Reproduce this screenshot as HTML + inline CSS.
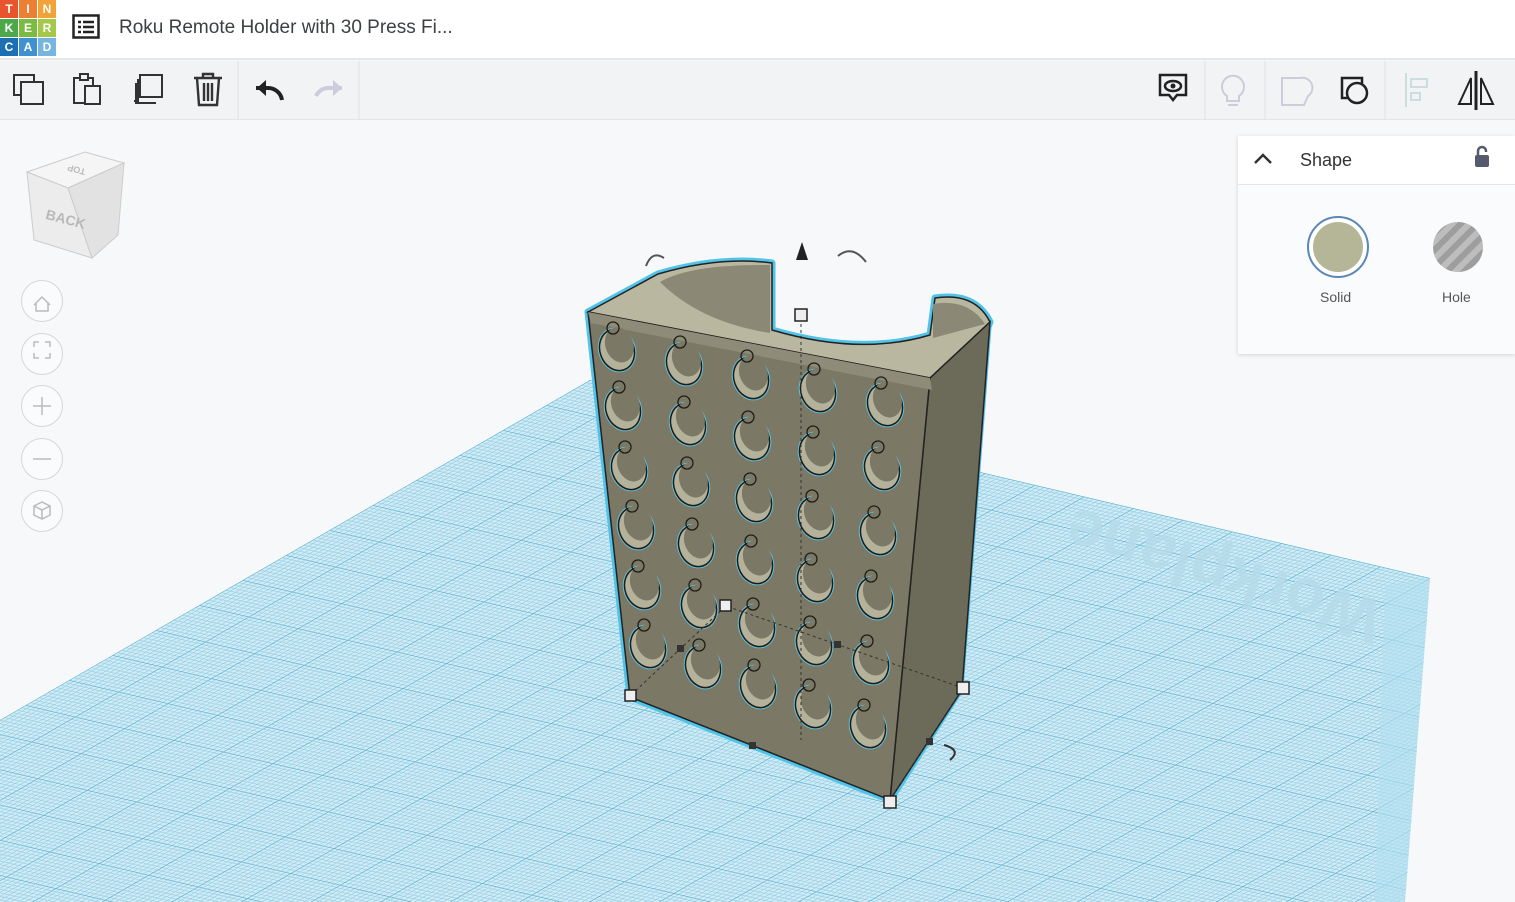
<!DOCTYPE html>
<html><head><meta charset="utf-8"><style>
*{margin:0;padding:0;box-sizing:border-box}
body{width:1515px;height:902px;overflow:hidden;background:#f7f8f9;font-family:"Liberation Sans",sans-serif;position:relative}
.hdr{position:absolute;left:0;top:0;width:1515px;height:60px;background:#fff;border-bottom:2px solid #e4e6e8}
.tb{position:absolute;left:0;top:61px;width:1515px;height:59px;background:#f2f3f4;border-bottom:1px solid #e3e5e7}
.logo{position:absolute;left:0;top:0;width:56px;height:56px;display:grid;grid-template-columns:repeat(3,18px);gap:1px}
.logo div{color:#fff;font:bold 12px "Liberation Sans";text-align:center;line-height:18px;height:18px}
.title{position:absolute;left:119px;top:17px;font-size:19px;color:#3c4043}
.panel{position:absolute;left:1238px;top:136px;width:277px;height:218px;background:#fafbfc;box-shadow:0 1px 4px rgba(0,0,0,.15)}
.ph{height:49px;background:#fff;border-bottom:1px solid #e4e6e8;position:relative}
.nav{position:absolute;left:21px;width:42px;height:42px;border:1.5px solid #d4d7da;border-radius:50%;background:#fafbfc}
</style></head><body>
<svg width="1515" height="902" style="position:absolute;left:0;top:0">
<defs>
<pattern id="g" patternUnits="userSpaceOnUse" width="10" height="10" patternTransform="matrix(4.94,1.165,-4.34,2.5,590,380)">
<rect width="10" height="10" fill="#d0ebf5"/>
<path d="M1 0V10M2 0V10M3 0V10M4 0V10M5 0V10M6 0V10M7 0V10M8 0V10M9 0V10M0 1H10M0 2H10M0 3H10M0 4H10M0 5H10M0 6H10M0 7H10M0 8H10M0 9H10" stroke="#8dcbe2" stroke-width="0.16"/>
<path d="M0 0V10M0 0H10" stroke="#5fb3d3" stroke-width="0.4"/>
</pattern>
<g id="h">
<ellipse cx="0" cy="0" rx="17" ry="21" transform="rotate(-20)" fill="#7d7b68" stroke="#5fc0e0" stroke-width="3.5"/>
<ellipse cx="0" cy="0" rx="17" ry="21" transform="rotate(-20)" fill="#b4b29b" stroke="#1d1d18" stroke-width="1.5"/>
<ellipse cx="4" cy="-4" rx="14" ry="18" transform="rotate(-20)" fill="#7b7966"/>
<circle cx="-4" cy="-22" r="6" fill="none" stroke="#1d1d18" stroke-width="1.3"/>
</g>
</defs>
<polygon points="0,720 590,380 1430,578 1405,902 0,902" fill="url(#g)"/>
<polygon points="1385,585 1430,578 1405,902 1375,902" fill="#b2e0f0" opacity=".6"/>
<text x="1230" y="555" font-size="64" font-weight="bold" fill="#b5dbe9" opacity=".8" transform="rotate(197 1230 555)" text-anchor="middle">Workplane</text>
<!-- object -->
<path d="M588,312 L658,274 Q720,256 772,263 L772,330 Q860,356 930,335 L935,298 Q975,292 990,322 L988,327 L960,690 L890,800 L630,697 Z" fill="none" stroke="#4fc3e8" stroke-width="7" stroke-linejoin="round"/>
<path d="M588,312 L658,274 Q720,256 772,263 L772,330 Q860,356 930,335 L935,298 Q975,292 990,322 L930,378 Z" fill="#b9b7a0" stroke="#222" stroke-width="1.5"/>
<path d="M660,282 Q690,264 770,265 L770,333 Q700,322 660,282 Z" fill="#8b8975"/>
<path d="M933,304 Q968,298 985,324 L933,338 Z" fill="#8b8975"/>
<polygon points="930,378 990,322 962,690 890,800" fill="#6c6a59" stroke="#222" stroke-width="1.5"/>
<polygon points="588,312 930,378 890,800 630,697" fill="#7b7966" stroke="#222" stroke-width="1.5"/>
<polygon points="588,312 930,378 932,390 591,323" fill="#8e8c78"/>
<use href="#h" x="617" y="350"/><use href="#h" x="684" y="364"/><use href="#h" x="751" y="378"/><use href="#h" x="818" y="391"/><use href="#h" x="885" y="405"/>
<use href="#h" x="623" y="409"/><use href="#h" x="688" y="424"/><use href="#h" x="752" y="439"/><use href="#h" x="817" y="454"/><use href="#h" x="882" y="469"/>
<use href="#h" x="629" y="469"/><use href="#h" x="691" y="485"/><use href="#h" x="754" y="501"/><use href="#h" x="816" y="518"/><use href="#h" x="878" y="534"/>
<use href="#h" x="636" y="528"/><use href="#h" x="696" y="546"/><use href="#h" x="755" y="563"/><use href="#h" x="815" y="581"/><use href="#h" x="875" y="598"/>
<use href="#h" x="642" y="588"/><use href="#h" x="699" y="607"/><use href="#h" x="757" y="626"/><use href="#h" x="814" y="644"/><use href="#h" x="871" y="663"/>
<use href="#h" x="648" y="647"/><use href="#h" x="703" y="667"/><use href="#h" x="758" y="687"/><use href="#h" x="813" y="707"/><use href="#h" x="868" y="727"/>
<g stroke="#333" stroke-dasharray="3,3" fill="none" stroke-width="1">
<path d="M801,318 V740"/><path d="M631,695 L726,606 L963,688 L890,800"/>
</g>
<g fill="#eee" stroke="#222" stroke-width="1.5">
<rect x="795" y="309" width="12" height="12"/><rect x="625" y="690" width="11" height="11"/><rect x="720" y="600" width="11" height="11"/><rect x="957" y="682" width="12" height="12"/><rect x="884" y="796" width="12" height="12"/>
</g>
<g fill="#333"><rect x="677" y="645" width="7" height="7"/><rect x="834" y="641" width="7" height="7"/><rect x="749" y="742" width="7" height="7"/><rect x="926" y="738" width="7" height="7"/></g>
<path d="M796,260 L802,242 L808,260 Z" fill="#222"/>
<path d="M646,266 Q652,250 664,258 M838,256 Q852,244 866,262" stroke="#555" stroke-width="2" fill="none"/>
<path d="M944,745 Q962,750 950,760" stroke="#333" stroke-width="2" fill="none"/>
<!-- view cube -->
<polygon points="27,172 85,152 124,163 68,188" fill="#f5f5f5" stroke="#ccc"/>
<polygon points="27,172 68,188 92,258 34,240" fill="#ececec" stroke="#ccc"/>
<polygon points="68,188 124,163 118,235 92,258" fill="#e2e2e2" stroke="#ccc"/>
<text x="45" y="222" font-size="14" font-weight="bold" fill="#b8b8b8" transform="rotate(15 58 220)">BACK</text>
<text x="62" y="170" font-size="9" font-weight="bold" fill="#bbb" transform="rotate(195 74 168)">TOP</text>
</svg>
<div class="hdr">
<div class="logo">
<div style="background:#e8542b">T</div><div style="background:#ed7f32">I</div><div style="background:#f2a338">N</div>
<div style="background:#4ca84a">K</div><div style="background:#7cbb42">E</div><div style="background:#a4c84a">R</div>
<div style="background:#1d6fb4">C</div><div style="background:#3f92cf">A</div><div style="background:#76b5df">D</div>
</div>
<svg style="position:absolute;left:72px;top:14px" width="28" height="26"><rect x="1.5" y="1.5" width="25" height="22" fill="none" stroke="#222" stroke-width="2.5"/><path d="M6 8h3M11 8h11M6 13h3M11 13h11M6 18h3M11 18h11" stroke="#222" stroke-width="2.5"/></svg>
<div class="title">Roku Remote Holder with 30 Press Fi...</div>
</div>
<div class="tb">
<svg width="1515" height="59" style="position:absolute;left:0;top:0" fill="none" stroke-width="2">
<path d="M238 0V59M359 0V59M1265 0V59M1385 0V59M1205 0V59" stroke="#e0e2e4" stroke-width="1"/>
<g stroke="#333"><rect x="14" y="14" width="20" height="20"/><rect x="21" y="21" width="22" height="22" fill="#f2f3f4"/>
<rect x="74" y="17" width="19" height="25"/><rect x="80" y="13" width="8" height="6" fill="#f2f3f4"/><rect x="85" y="25" width="15" height="18" fill="#f2f3f4"/>
<rect x="140" y="14" width="22" height="22"/><path d="M138 18v22h-4M136 22v20h20"/>
<path d="M194 17h28M203 17v-4h10v4M197 17l2 27h18l2-27M204 22v18M208 22v18M212 22v18" stroke-width="2.4"/></g>
<path d="M256 27h12a14 14 0 0 1 14 12" stroke="#222" stroke-width="4"/><path d="M257 27l9-8v16z" fill="#222" stroke="none"/>
<path d="M342 27h-12a14 14 0 0 0-14 8" stroke="#ccd" stroke-width="4"/><path d="M342 27l-9-8v16z" fill="#ccd" stroke="none"/>
<path d="M1160 14h26v20h-9l-4 5-4-5h-9z" stroke="#222" stroke-width="2.5"/><ellipse cx="1173" cy="25" rx="8" ry="5" stroke="#222" stroke-width="2.5"/><circle cx="1173" cy="25" r="2.5" fill="#222"/>
<path d="M1227 35a11 11 0 1 1 12 0v5h-12z M1228 44h10" stroke="#ccd"/>
<path d="M1282 17h18a10 10 0 0 1 8 18l-4 9h-22z" stroke="#ccd"/>
<rect x="1342" y="17" width="20" height="20" stroke="#222" stroke-width="2.5"/><circle cx="1357" cy="32" r="10" fill="#f2f3f4" stroke="#222" stroke-width="2.5"/>
<path d="M1406 12v34M1411 18h16v8h-16zM1411 32h9v7h-9z" stroke="#cdd"/>
<path d="M1476 10v39" stroke="#222" stroke-width="3"/><path d="M1471 17l-12 26h12zM1481 17l12 26h-12z" stroke="#222" stroke-width="2"/>
</svg>
</div>
<div class="panel">
<div class="ph">
<svg style="position:absolute;left:15px;top:16px" width="20" height="14"><path d="M2 11l8-8 8 8" stroke="#333" stroke-width="2.5" fill="none"/></svg>
<div style="position:absolute;left:62px;top:14px;font-size:18px;color:#333">Shape</div>
<svg style="position:absolute;left:234px;top:8px" width="20" height="26"><path d="M6 12V7a4 4 0 0 1 8 0v1" stroke="#555a6e" stroke-width="2.5" fill="none"/><rect x="3" y="11" width="14" height="12" rx="2" fill="#555a6e"/></svg>
</div>
<div style="position:absolute;left:69px;top:80px;width:62px;height:62px;border:2px solid #5b87b8;border-radius:50%;padding:4px;background:#fff"><div style="width:100%;height:100%;border-radius:50%;background:#b5b597"></div></div>
<div style="position:absolute;left:195px;top:86px;width:50px;height:50px;border-radius:50%;background:repeating-linear-gradient(135deg,#bdbdbd 0 6px,#9e9e9e 6px 12px)"></div>
<div style="position:absolute;left:82px;top:153px;font-size:14px;color:#555">Solid</div>
<div style="position:absolute;left:204px;top:153px;font-size:14px;color:#555">Hole</div>
</div>
<div class="nav" style="top:280px"></div><div class="nav" style="top:333px"></div><div class="nav" style="top:385px"></div><div class="nav" style="top:438px"></div><div class="nav" style="top:490px"></div>
<svg width="80" height="260" style="position:absolute;left:0;top:280px" fill="none" stroke="#bbb" stroke-width="1.5">
<path d="M34 25l8-8 8 8M36 23v8h12v-8"/>
<path d="M34 67v-5h5M45 62h5v5M50 73v5h-5M39 78h-5v-5"/>
<path d="M42 117v18M33 126h18"/><path d="M33 179h18"/>
<path d="M42 222l8 4v9l-8 4-8-4v-9zM34 226l8 4 8-4M42 230v9"/>
</svg>
</body></html>
